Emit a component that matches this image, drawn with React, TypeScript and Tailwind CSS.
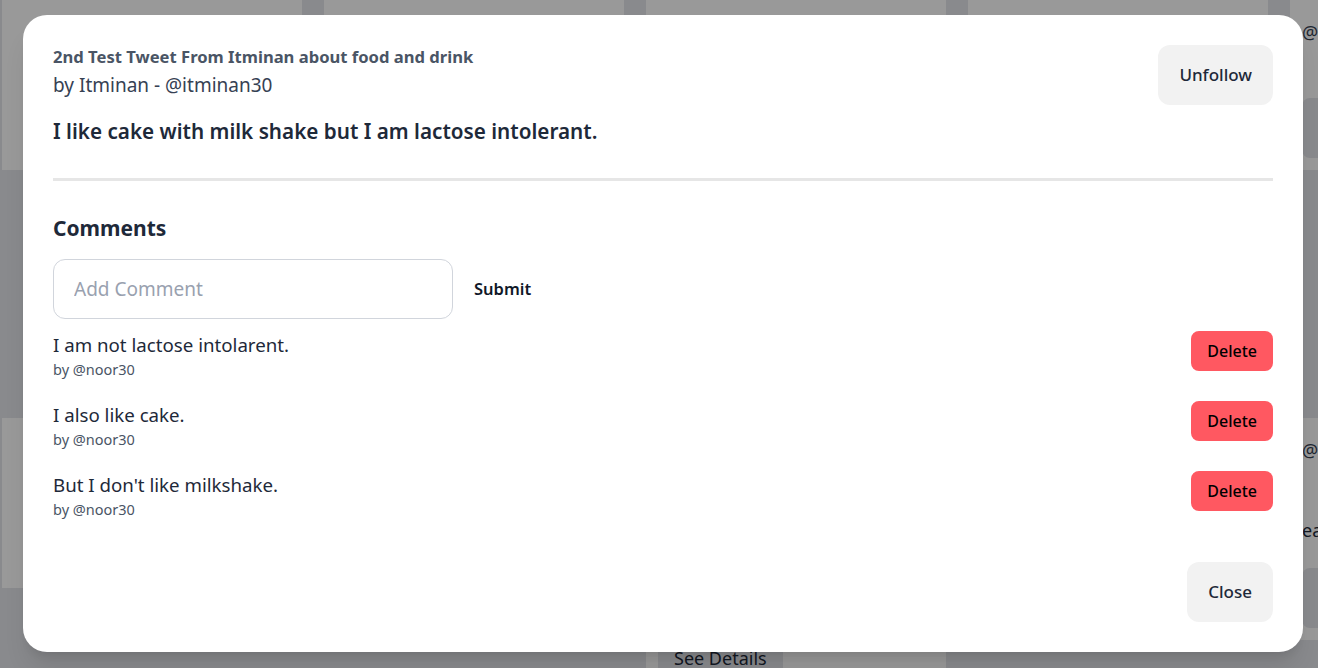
import { useState } from 'react';

type Comment = {
  id: number;
  text: string;
  author: string;
};

const comments: Comment[] = [
  { id: 1, text: 'I am not lactose intolarent.', author: 'noor30' },
  { id: 2, text: 'I also like cake.', author: 'noor30' },
  { id: 3, text: "But I don't like milkshake.", author: 'noor30' },
];

type BgTweet = { by: string; body: string; right?: boolean; spaced?: boolean };

const rowOne: BgTweet[] = [
  { by: 'by Noor - @noor30', body: 'Hello there' },
  { by: 'by Noor - @noor30', body: 'This tweet is important', right: true },
  { by: 'by Noor - @noor30', body: 'Just testing the app' },
  { by: 'by Sara - @sara12', body: 'Going to the beach' },
  { by: 'by Itminan - @itminan30', body: 'Pizza is the best' },
  { by: '@noor30', body: '' },
];

const rowTwo: BgTweet[] = [
  { by: 'by Ali - @ali7', body: 'Hello there' },
  { by: 'by Ali - @ali7', body: 'Reading a good book', right: true },
  { by: 'by Sara - @sara12', body: 'Coffee time' },
  {
    by: 'by Ali - @ali7',
    body: 'Football tonight with the whole team and then dinner at the new place downtown, we will be there until late so see you all there tonight',
  },
  { by: 'by Itminan - @itminan30', body: 'Busy day at work' },
  { by: '@noor30', body: 'each day is hot', spaced: true },
];

function BackgroundCard({ tweet }: { tweet: BgTweet }) {
  return (
    <div
      className={`w-[300px] shrink-0 bg-white px-3 pt-[18px] pb-3 flex flex-col gap-3 ${
        tweet.right ? 'items-end text-right' : 'items-start'
      }`}
    >
      <p className="text-lg leading-7 text-gray-700 whitespace-nowrap">{tweet.by}</p>
      <p className={`text-lg leading-7 text-gray-800 min-h-7 ${tweet.spaced ? 'mt-[40px]' : ''}`}>{tweet.body}</p>
      <button className={`bg-gray-200 h-[60px] px-4 rounded-lg text-lg text-gray-800 ${tweet.spaced ? 'mt-3' : ''}`}>
        See Details
      </button>
    </div>
  );
}

export default function App() {
  const [comment, setComment] = useState('');

  return (
    <div
      className="relative w-[1318px] h-[668px] overflow-hidden bg-gray-200"
      style={{ fontFamily: '"Noto Sans", "Open Sans", sans-serif' }}
    >
      {/* page behind the modal */}
      <div className="flex flex-col items-start gap-[248px]">
        <div className="flex items-start gap-[22px] -ml-[320px]">
          {rowOne.map((t, i) => (
            <BackgroundCard key={i} tweet={t} />
          ))}
        </div>
        <div className="flex items-start gap-[22px] -ml-[320px]">
          {rowTwo.map((t, i) => (
            <BackgroundCard key={i} tweet={t} />
          ))}
        </div>
      </div>

      {/* modal */}
      <div className="absolute inset-0 bg-black/40 pl-[23px] pt-[15px]">
        <div className="w-[1280px] h-[637px] bg-white rounded-3xl p-[30px] flex flex-col shadow-xl">
          <div className="flex justify-between items-start">
            <div className="flex flex-col">
              <h1 className="text-[16.6px] leading-6 font-bold text-gray-600">
                2nd Test Tweet From Itminan about food and drink
              </h1>
              <p className="mt-[2px] text-[19px] leading-7 text-gray-700">by Itminan - @itminan30</p>
              <p className="mt-[18px] text-[20.7px] leading-7 font-semibold text-gray-800">
                I like cake with milk shake but I am lactose intolerant.
              </p>
            </div>
            <button className="h-[60px] px-[21px] bg-[#f2f2f2] rounded-xl text-[17px] font-medium text-gray-800">
              Unfollow
            </button>
          </div>

          <hr className="mt-[33px] border-t-[3px] border-[#e6e6e6]" />

          <h2 className="mt-[33px] text-[21px] leading-7 font-bold text-gray-800">Comments</h2>

          <div className="mt-[17px] flex items-center">
            <input
              value={comment}
              onChange={(e) => setComment(e.target.value)}
              placeholder="Add Comment"
              className="w-[400px] h-[60px] rounded-xl border border-gray-300 px-5 text-[19px] text-gray-800 placeholder:text-gray-400 outline-none"
            />
            <button className="ml-[21px] text-[16.5px] font-semibold text-gray-900">Submit</button>
          </div>

          <ul className="mt-[12px] flex flex-col gap-[22px]">
            {comments.map((c) => (
              <li key={c.id} className="flex justify-between items-start">
                <div className="flex flex-col">
                  <p className="text-[18.7px] leading-7 text-gray-800">{c.text}</p>
                  <p className="text-[14.5px] leading-5 text-gray-600">by @{c.author}</p>
                </div>
                <button className="h-10 px-4 rounded-lg bg-[#ff5861] text-base font-medium text-black">
                  Delete
                </button>
              </li>
            ))}
          </ul>

          <div className="mt-auto flex justify-end">
            <button className="h-[60px] px-[21px] bg-[#f2f2f2] rounded-xl text-[17px] font-medium text-gray-800">
              Close
            </button>
          </div>
        </div>
      </div>
    </div>
  );
}
